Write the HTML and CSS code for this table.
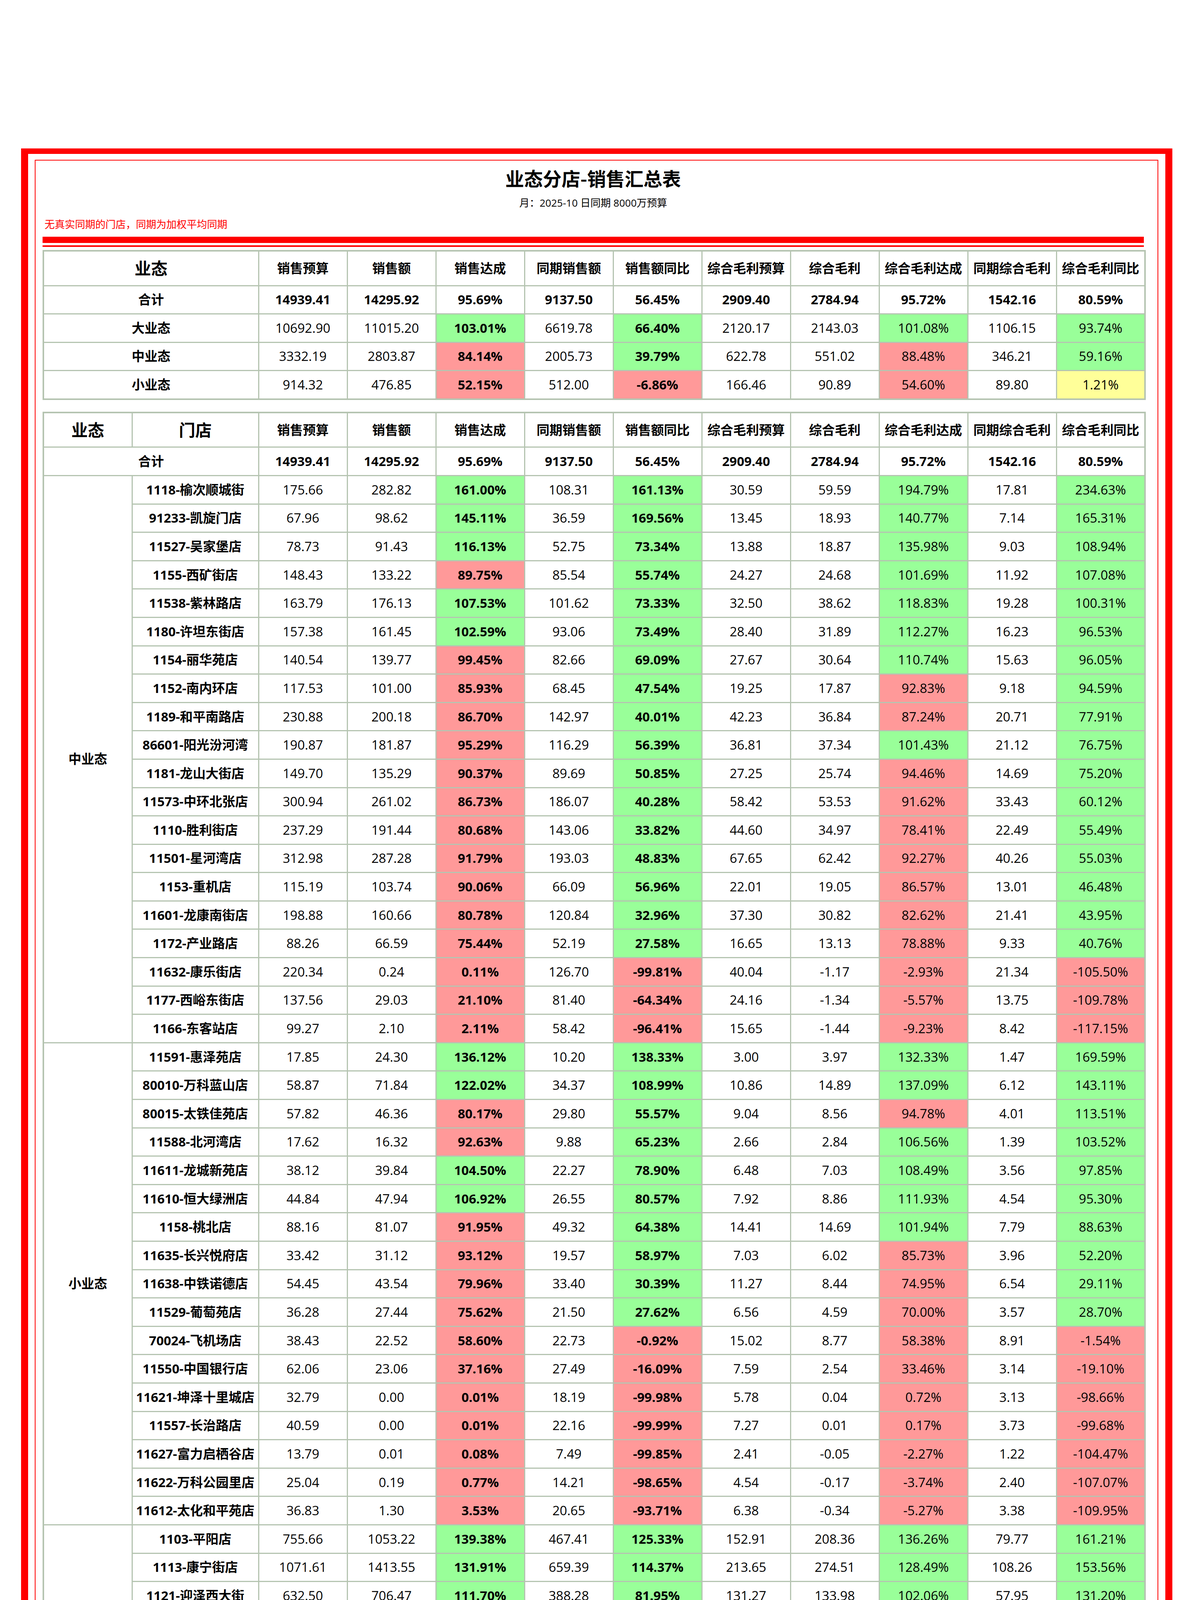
FILE: index.html
```html
<!DOCTYPE html>
<html lang="zh-CN">
<head>
<meta charset="utf-8">
<title>业态分店-销售汇总表</title>
<link rel="stylesheet" href="styles.css">
</head>
<body>
<div class="frame">
  <div class="sheet">
    <h1 class="title">业态分店-销售汇总表</h1>
    <div class="subtitle">月：2025-10 日同期 8000万预算</div>
    <div class="note">无真实同期的门店，同期为加权平均同期</div>
    <div class="bar-thick"></div>
    <div class="bar-thin"></div>

    <table class="grid summary">
      <colgroup><col class="c-wide"><col span="10" class="c-num"></colgroup>
      <tr class="head"><th class="big">业态</th><th>销售预算</th><th>销售额</th><th>销售达成</th><th>同期销售额</th><th>销售额同比</th><th>综合毛利预算</th><th>综合毛利</th><th>综合毛利达成</th><th>同期综合毛利</th><th>综合毛利同比</th></tr>
      <tr class="total"><td>合计</td><td>14939.41</td><td>14295.92</td><td>95.69%</td><td>9137.50</td><td>56.45%</td><td>2909.40</td><td>2784.94</td><td>95.72%</td><td>1542.16</td><td>80.59%</td></tr>
      <tr><td class="n">大业态</td><td>10692.90</td><td>11015.20</td><td class="b g">103.01%</td><td>6619.78</td><td class="b g">66.40%</td><td>2120.17</td><td>2143.03</td><td class="g">101.08%</td><td>1106.15</td><td class="g">93.74%</td></tr>
      <tr><td class="n">中业态</td><td>3332.19</td><td>2803.87</td><td class="b p">84.14%</td><td>2005.73</td><td class="b g">39.79%</td><td>622.78</td><td>551.02</td><td class="p">88.48%</td><td>346.21</td><td class="g">59.16%</td></tr>
      <tr><td class="n">小业态</td><td>914.32</td><td>476.85</td><td class="b p">52.15%</td><td>512.00</td><td class="b p">-6.86%</td><td>166.46</td><td>90.89</td><td class="p">54.60%</td><td>89.80</td><td class="y">1.21%</td></tr>
    </table>

    <table class="grid detail">
      <colgroup><col class="c-grp"><col class="c-store"><col span="10" class="c-num"></colgroup>
      <tr class="head"><th class="big">业态</th><th class="big">门店</th><th>销售预算</th><th>销售额</th><th>销售达成</th><th>同期销售额</th><th>销售额同比</th><th>综合毛利预算</th><th>综合毛利</th><th>综合毛利达成</th><th>同期综合毛利</th><th>综合毛利同比</th></tr>
      <tr class="total"><td colspan="2">合计</td><td>14939.41</td><td>14295.92</td><td>95.69%</td><td>9137.50</td><td>56.45%</td><td>2909.40</td><td>2784.94</td><td>95.72%</td><td>1542.16</td><td>80.59%</td></tr>

      <tr><td class="n" rowspan="20">中业态</td><td class="n">1118-榆次顺城街</td><td>175.66</td><td>282.82</td><td class="b g">161.00%</td><td>108.31</td><td class="b g">161.13%</td><td>30.59</td><td>59.59</td><td class="g">194.79%</td><td>17.81</td><td class="g">234.63%</td></tr>
      <tr><td class="n">91233-凯旋门店</td><td>67.96</td><td>98.62</td><td class="b g">145.11%</td><td>36.59</td><td class="b g">169.56%</td><td>13.45</td><td>18.93</td><td class="g">140.77%</td><td>7.14</td><td class="g">165.31%</td></tr>
      <tr><td class="n">11527-吴家堡店</td><td>78.73</td><td>91.43</td><td class="b g">116.13%</td><td>52.75</td><td class="b g">73.34%</td><td>13.88</td><td>18.87</td><td class="g">135.98%</td><td>9.03</td><td class="g">108.94%</td></tr>
      <tr><td class="n">1155-西矿街店</td><td>148.43</td><td>133.22</td><td class="b p">89.75%</td><td>85.54</td><td class="b g">55.74%</td><td>24.27</td><td>24.68</td><td class="g">101.69%</td><td>11.92</td><td class="g">107.08%</td></tr>
      <tr><td class="n">11538-紫林路店</td><td>163.79</td><td>176.13</td><td class="b g">107.53%</td><td>101.62</td><td class="b g">73.33%</td><td>32.50</td><td>38.62</td><td class="g">118.83%</td><td>19.28</td><td class="g">100.31%</td></tr>
      <tr><td class="n">1180-许坦东街店</td><td>157.38</td><td>161.45</td><td class="b g">102.59%</td><td>93.06</td><td class="b g">73.49%</td><td>28.40</td><td>31.89</td><td class="g">112.27%</td><td>16.23</td><td class="g">96.53%</td></tr>
      <tr><td class="n">1154-丽华苑店</td><td>140.54</td><td>139.77</td><td class="b p">99.45%</td><td>82.66</td><td class="b g">69.09%</td><td>27.67</td><td>30.64</td><td class="g">110.74%</td><td>15.63</td><td class="g">96.05%</td></tr>
      <tr><td class="n">1152-南内环店</td><td>117.53</td><td>101.00</td><td class="b p">85.93%</td><td>68.45</td><td class="b g">47.54%</td><td>19.25</td><td>17.87</td><td class="p">92.83%</td><td>9.18</td><td class="g">94.59%</td></tr>
      <tr><td class="n">1189-和平南路店</td><td>230.88</td><td>200.18</td><td class="b p">86.70%</td><td>142.97</td><td class="b g">40.01%</td><td>42.23</td><td>36.84</td><td class="p">87.24%</td><td>20.71</td><td class="g">77.91%</td></tr>
      <tr><td class="n">86601-阳光汾河湾</td><td>190.87</td><td>181.87</td><td class="b p">95.29%</td><td>116.29</td><td class="b g">56.39%</td><td>36.81</td><td>37.34</td><td class="g">101.43%</td><td>21.12</td><td class="g">76.75%</td></tr>
      <tr><td class="n">1181-龙山大街店</td><td>149.70</td><td>135.29</td><td class="b p">90.37%</td><td>89.69</td><td class="b g">50.85%</td><td>27.25</td><td>25.74</td><td class="p">94.46%</td><td>14.69</td><td class="g">75.20%</td></tr>
      <tr><td class="n">11573-中环北张店</td><td>300.94</td><td>261.02</td><td class="b p">86.73%</td><td>186.07</td><td class="b g">40.28%</td><td>58.42</td><td>53.53</td><td class="p">91.62%</td><td>33.43</td><td class="g">60.12%</td></tr>
      <tr><td class="n">1110-胜利街店</td><td>237.29</td><td>191.44</td><td class="b p">80.68%</td><td>143.06</td><td class="b g">33.82%</td><td>44.60</td><td>34.97</td><td class="p">78.41%</td><td>22.49</td><td class="g">55.49%</td></tr>
      <tr><td class="n">11501-星河湾店</td><td>312.98</td><td>287.28</td><td class="b p">91.79%</td><td>193.03</td><td class="b g">48.83%</td><td>67.65</td><td>62.42</td><td class="p">92.27%</td><td>40.26</td><td class="g">55.03%</td></tr>
      <tr><td class="n">1153-重机店</td><td>115.19</td><td>103.74</td><td class="b p">90.06%</td><td>66.09</td><td class="b g">56.96%</td><td>22.01</td><td>19.05</td><td class="p">86.57%</td><td>13.01</td><td class="g">46.48%</td></tr>
      <tr><td class="n">11601-龙康南街店</td><td>198.88</td><td>160.66</td><td class="b p">80.78%</td><td>120.84</td><td class="b g">32.96%</td><td>37.30</td><td>30.82</td><td class="p">82.62%</td><td>21.41</td><td class="g">43.95%</td></tr>
      <tr><td class="n">1172-产业路店</td><td>88.26</td><td>66.59</td><td class="b p">75.44%</td><td>52.19</td><td class="b g">27.58%</td><td>16.65</td><td>13.13</td><td class="p">78.88%</td><td>9.33</td><td class="g">40.76%</td></tr>
      <tr><td class="n">11632-康乐街店</td><td>220.34</td><td>0.24</td><td class="b p">0.11%</td><td>126.70</td><td class="b p">-99.81%</td><td>40.04</td><td>-1.17</td><td class="p">-2.93%</td><td>21.34</td><td class="p">-105.50%</td></tr>
      <tr><td class="n">1177-西峪东街店</td><td>137.56</td><td>29.03</td><td class="b p">21.10%</td><td>81.40</td><td class="b p">-64.34%</td><td>24.16</td><td>-1.34</td><td class="p">-5.57%</td><td>13.75</td><td class="p">-109.78%</td></tr>
      <tr><td class="n">1166-东客站店</td><td>99.27</td><td>2.10</td><td class="b p">2.11%</td><td>58.42</td><td class="b p">-96.41%</td><td>15.65</td><td>-1.44</td><td class="p">-9.23%</td><td>8.42</td><td class="p">-117.15%</td></tr>

      <tr><td class="n" rowspan="17">小业态</td><td class="n">11591-惠泽苑店</td><td>17.85</td><td>24.30</td><td class="b g">136.12%</td><td>10.20</td><td class="b g">138.33%</td><td>3.00</td><td>3.97</td><td class="g">132.33%</td><td>1.47</td><td class="g">169.59%</td></tr>
      <tr><td class="n">80010-万科蓝山店</td><td>58.87</td><td>71.84</td><td class="b g">122.02%</td><td>34.37</td><td class="b g">108.99%</td><td>10.86</td><td>14.89</td><td class="g">137.09%</td><td>6.12</td><td class="g">143.11%</td></tr>
      <tr><td class="n">80015-太铁佳苑店</td><td>57.82</td><td>46.36</td><td class="b p">80.17%</td><td>29.80</td><td class="b g">55.57%</td><td>9.04</td><td>8.56</td><td class="p">94.78%</td><td>4.01</td><td class="g">113.51%</td></tr>
      <tr><td class="n">11588-北河湾店</td><td>17.62</td><td>16.32</td><td class="b p">92.63%</td><td>9.88</td><td class="b g">65.23%</td><td>2.66</td><td>2.84</td><td class="g">106.56%</td><td>1.39</td><td class="g">103.52%</td></tr>
      <tr><td class="n">11611-龙城新苑店</td><td>38.12</td><td>39.84</td><td class="b g">104.50%</td><td>22.27</td><td class="b g">78.90%</td><td>6.48</td><td>7.03</td><td class="g">108.49%</td><td>3.56</td><td class="g">97.85%</td></tr>
      <tr><td class="n">11610-恒大绿洲店</td><td>44.84</td><td>47.94</td><td class="b g">106.92%</td><td>26.55</td><td class="b g">80.57%</td><td>7.92</td><td>8.86</td><td class="g">111.93%</td><td>4.54</td><td class="g">95.30%</td></tr>
      <tr><td class="n">1158-桃北店</td><td>88.16</td><td>81.07</td><td class="b p">91.95%</td><td>49.32</td><td class="b g">64.38%</td><td>14.41</td><td>14.69</td><td class="g">101.94%</td><td>7.79</td><td class="g">88.63%</td></tr>
      <tr><td class="n">11635-长兴悦府店</td><td>33.42</td><td>31.12</td><td class="b p">93.12%</td><td>19.57</td><td class="b g">58.97%</td><td>7.03</td><td>6.02</td><td class="p">85.73%</td><td>3.96</td><td class="g">52.20%</td></tr>
      <tr><td class="n">11638-中铁诺德店</td><td>54.45</td><td>43.54</td><td class="b p">79.96%</td><td>33.40</td><td class="b g">30.39%</td><td>11.27</td><td>8.44</td><td class="p">74.95%</td><td>6.54</td><td class="g">29.11%</td></tr>
      <tr><td class="n">11529-葡萄苑店</td><td>36.28</td><td>27.44</td><td class="b p">75.62%</td><td>21.50</td><td class="b g">27.62%</td><td>6.56</td><td>4.59</td><td class="p">70.00%</td><td>3.57</td><td class="g">28.70%</td></tr>
      <tr><td class="n">70024-飞机场店</td><td>38.43</td><td>22.52</td><td class="b p">58.60%</td><td>22.73</td><td class="b p">-0.92%</td><td>15.02</td><td>8.77</td><td class="p">58.38%</td><td>8.91</td><td class="p">-1.54%</td></tr>
      <tr><td class="n">11550-中国银行店</td><td>62.06</td><td>23.06</td><td class="b p">37.16%</td><td>27.49</td><td class="b p">-16.09%</td><td>7.59</td><td>2.54</td><td class="p">33.46%</td><td>3.14</td><td class="p">-19.10%</td></tr>
      <tr><td class="n">11621-坤泽十里城店</td><td>32.79</td><td>0.00</td><td class="b p">0.01%</td><td>18.19</td><td class="b p">-99.98%</td><td>5.78</td><td>0.04</td><td class="p">0.72%</td><td>3.13</td><td class="p">-98.66%</td></tr>
      <tr><td class="n">11557-长治路店</td><td>40.59</td><td>0.00</td><td class="b p">0.01%</td><td>22.16</td><td class="b p">-99.99%</td><td>7.27</td><td>0.01</td><td class="p">0.17%</td><td>3.73</td><td class="p">-99.68%</td></tr>
      <tr><td class="n">11627-富力启栖谷店</td><td>13.79</td><td>0.01</td><td class="b p">0.08%</td><td>7.49</td><td class="b p">-99.85%</td><td>2.41</td><td>-0.05</td><td class="p">-2.27%</td><td>1.22</td><td class="p">-104.47%</td></tr>
      <tr><td class="n">11622-万科公园里店</td><td>25.04</td><td>0.19</td><td class="b p">0.77%</td><td>14.21</td><td class="b p">-98.65%</td><td>4.54</td><td>-0.17</td><td class="p">-3.74%</td><td>2.40</td><td class="p">-107.07%</td></tr>
      <tr><td class="n">11612-太化和平苑店</td><td>36.83</td><td>1.30</td><td class="b p">3.53%</td><td>20.65</td><td class="b p">-93.71%</td><td>6.38</td><td>-0.34</td><td class="p">-5.27%</td><td>3.38</td><td class="p">-109.95%</td></tr>

      <tr><td class="n" rowspan="22">大业态</td><td class="n">1103-平阳店</td><td>755.66</td><td>1053.22</td><td class="b g">139.38%</td><td>467.41</td><td class="b g">125.33%</td><td>152.91</td><td>208.36</td><td class="g">136.26%</td><td>79.77</td><td class="g">161.21%</td></tr>
      <tr><td class="n">1113-康宁街店</td><td>1071.61</td><td>1413.55</td><td class="b g">131.91%</td><td>659.39</td><td class="b g">114.37%</td><td>213.65</td><td>274.51</td><td class="g">128.49%</td><td>108.26</td><td class="g">153.56%</td></tr>
      <tr><td class="n">1121-迎泽西大街</td><td>632.50</td><td>706.47</td><td class="b g">111.70%</td><td>388.28</td><td class="b g">81.95%</td><td>131.27</td><td>133.98</td><td class="g">102.06%</td><td>57.95</td><td class="g">131.20%</td></tr>
      <tr><td class="n">1128-体育路店</td><td>477.14</td><td>501.13</td><td class="b g">105.03%</td><td>293.68</td><td class="b g">70.64%</td><td>89.77</td><td>101.88</td><td class="g">113.49%</td><td>44.37</td><td class="g">129.62%</td></tr>
      <tr><td class="n">1101-迎宾店</td><td>1413.82</td><td>1815.77</td><td class="b g">128.43%</td><td>898.07</td><td class="b g">102.19%</td><td>275.95</td><td>364.13</td><td class="g">131.95%</td><td>159.75</td><td class="g">127.94%</td></tr>
      <tr><td class="n">1105-三墙路店</td><td>377.62</td><td>403.43</td><td class="b g">106.83%</td><td>226.75</td><td class="b g">77.92%</td><td>74.63</td><td>75.28</td><td class="g">100.87%</td><td>35.13</td><td class="g">114.28%</td></tr>
      <tr><td class="n">1108-漪汾路店</td><td>443.43</td><td>483.39</td><td class="b g">109.01%</td><td>272.27</td><td class="b g">77.54%</td><td>100.53</td><td>89.04</td><td class="p">88.57%</td><td>42.96</td><td class="g">107.28%</td></tr>
      <tr><td class="n">11634-双塔东街店</td><td>366.95</td><td>374.63</td><td class="b g">102.09%</td><td>219.23</td><td class="b g">70.88%</td><td>75.29</td><td>73.99</td><td class="p">98.26%</td><td>37.41</td><td class="g">97.76%</td></tr>
      <tr><td class="n">1107-五一路店</td><td>678.39</td><td>693.44</td><td class="b g">102.22%</td><td>418.67</td><td class="b g">65.63%</td><td>138.97</td><td>134.13</td><td class="p">96.52%</td><td>67.92</td><td class="g">97.49%</td></tr>
      <tr><td class="n">11630-凯旋街店</td><td>479.94</td><td>513.50</td><td class="b g">106.99%</td><td>292.31</td><td class="b g">75.67%</td><td>88.67</td><td>97.03</td><td class="g">109.43%</td><td>50.72</td><td class="g">91.31%</td></tr>
      <tr><td class="n">11631-羊市街店</td><td>321.79</td><td>331.90</td><td class="b g">103.14%</td><td>194.85</td><td class="b g">70.33%</td><td>66.05</td><td>59.55</td><td class="p">90.16%</td><td>31.58</td><td class="g">88.56%</td></tr>
      <tr><td class="n">26003-万达超市</td><td>321.27</td><td>310.23</td><td class="b p">96.57%</td><td>200.51</td><td class="b g">54.72%</td><td>63.06</td><td>66.28</td><td class="g">105.11%</td><td>35.90</td><td class="g">84.60%</td></tr>
      <tr><td class="n">11594-公元时代城</td><td>431.94</td><td>423.84</td><td class="b p">98.12%</td><td>272.03</td><td class="b g">55.80%</td><td>84.68</td><td>83.23</td><td class="p">98.29%</td><td>46.16</td><td class="g">80.30%</td></tr>
      <tr><td class="n">1122-兴华街店</td><td>481.26</td><td>449.23</td><td class="b p">93.34%</td><td>298.06</td><td class="b g">50.72%</td><td>97.36</td><td>84.85</td><td class="p">87.15%</td><td>48.49</td><td class="g">74.98%</td></tr>
      <tr><td class="n">11515-龙城北街店</td><td>233.40</td><td>182.19</td><td class="b p">78.06%</td><td>145.02</td><td class="b g">25.63%</td><td>41.94</td><td>35.54</td><td class="p">84.73%</td><td>22.46</td><td class="g">58.22%</td></tr>
      <tr><td class="n">11599-印象城店</td><td>502.56</td><td>409.04</td><td class="b p">81.39%</td><td>315.00</td><td class="b g">29.86%</td><td>93.15</td><td>81.41</td><td class="p">87.39%</td><td>54.43</td><td class="g">49.56%</td></tr>
      <tr><td class="n">1125-尖草坪店</td><td>415.60</td><td>322.31</td><td class="b p">77.55%</td><td>251.20</td><td class="b g">28.31%</td><td>86.47</td><td>58.55</td><td class="p">67.71%</td><td>39.72</td><td class="g">47.39%</td></tr>
      <tr><td class="n">11640-奥莱超市</td><td>265.71</td><td>173.95</td><td class="b p">65.47%</td><td>173.19</td><td class="b y">0.44%</td><td>49.28</td><td>35.61</td><td class="p">72.26%</td><td>29.52</td><td class="g">20.61%</td></tr>
      <tr><td class="n">11639-临汾店</td><td>313.29</td><td>197.39</td><td class="b p">63.00%</td><td>197.40</td><td class="b p">-0.01%</td><td>60.28</td><td>38.60</td><td class="p">64.04%</td><td>34.88</td><td class="g">10.68%</td></tr>
      <tr><td class="n">11629-朔州民福店</td><td>330.15</td><td>206.31</td><td class="b p">62.49%</td><td>207.67</td><td class="b p">-0.65%</td><td>63.90</td><td>40.40</td><td class="p">63.22%</td><td>37.82</td><td class="y">6.80%</td></tr>
      <tr><td class="n">11619-忻州店</td><td>281.96</td><td>35.95</td><td class="b p">12.75%</td><td>171.19</td><td class="b p">-79.00%</td><td>54.72</td><td>5.83</td><td class="p">10.66%</td><td>30.57</td><td class="p">-80.92%</td></tr>
      <tr><td class="n">26001-学府超市</td><td>96.93</td><td>14.33</td><td class="b p">14.79%</td><td>57.61</td><td class="b p">-75.12%</td><td>17.64</td><td>0.72</td><td class="p">4.07%</td><td>9.70</td><td class="p">-92.60%</td></tr>
    </table>

    <div class="bar-foot-thin"></div>
    <div class="bar-foot"></div>
  </div>
</div>
</body>
</html>
```

FILE: styles.css
```css
html, body {
  margin: 0;
  padding: 0;
  background: #ffffff;
}

body {
  font-family: "Open Sans", "Noto Sans CJK SC", sans-serif;
  color: #000000;
}

.frame {
  box-sizing: border-box;
  width: 2948px;
  margin: 380px 0 0 54px;
  border: 18px solid #ff0000;
  border-top-width: 14px;
  padding: 15px 18px 11px 17px;
}

.sheet {
  border: 2px solid #ff0000;
  padding: 14px 35px 13px 18px;
}

.title {
  margin: 0;
  font-size: 48px;
  line-height: 60px;
  font-weight: 700;
  text-align: center;
  font-family: "Noto Sans CJK SC", sans-serif;
}

.subtitle {
  margin-top: 17px;
  font-size: 26px;
  line-height: 34px;
  text-align: center;
}

.note {
  margin-top: 21px;
  padding-left: 5px;
  font-size: 26px;
  line-height: 34px;
  color: #ff0000;
}

.bar-thick {
  margin-top: 15px;
  height: 16px;
  background: #ff0000;
}

.bar-thin {
  margin-top: 6px;
  height: 4px;
  background: #ff0000;
}

.bar-foot-thin {
  height: 2px;
  background: #ff0000;
}

.bar-foot {
  margin-top: 2px;
  height: 4px;
  background: #ff0000;
}

.grid {
  width: 2820px;
  table-layout: fixed;
  border-collapse: collapse;
  border: 4px solid #b5c4b1;
  font-size: 33px;
}

.summary {
  margin-top: 8px;
}

.detail {
  margin-top: 30px;
}

.c-wide { width: 551px; }
.c-grp { width: 227px; }
.c-store { width: 324px; }
.c-num { width: 227px; }

.grid th,
.grid td {
  border: 3px solid #b5c4b1;
  padding: 0;
  text-align: center;
  vertical-align: middle;
  white-space: nowrap;
  height: 69.6px;
  line-height: 40px;
}

.grid th {
  font-weight: 700;
}

.grid .head th {
  height: 85.5px;
}

.grid th.big {
  font-size: 42px;
}

.grid .total td,
.grid td.n,
.grid td.b {
  font-weight: 700;
}

.grid td.g { background: #99ff99; }
.grid td.p { background: #ff9999; }
.grid td.y { background: #ffff99; }
```
